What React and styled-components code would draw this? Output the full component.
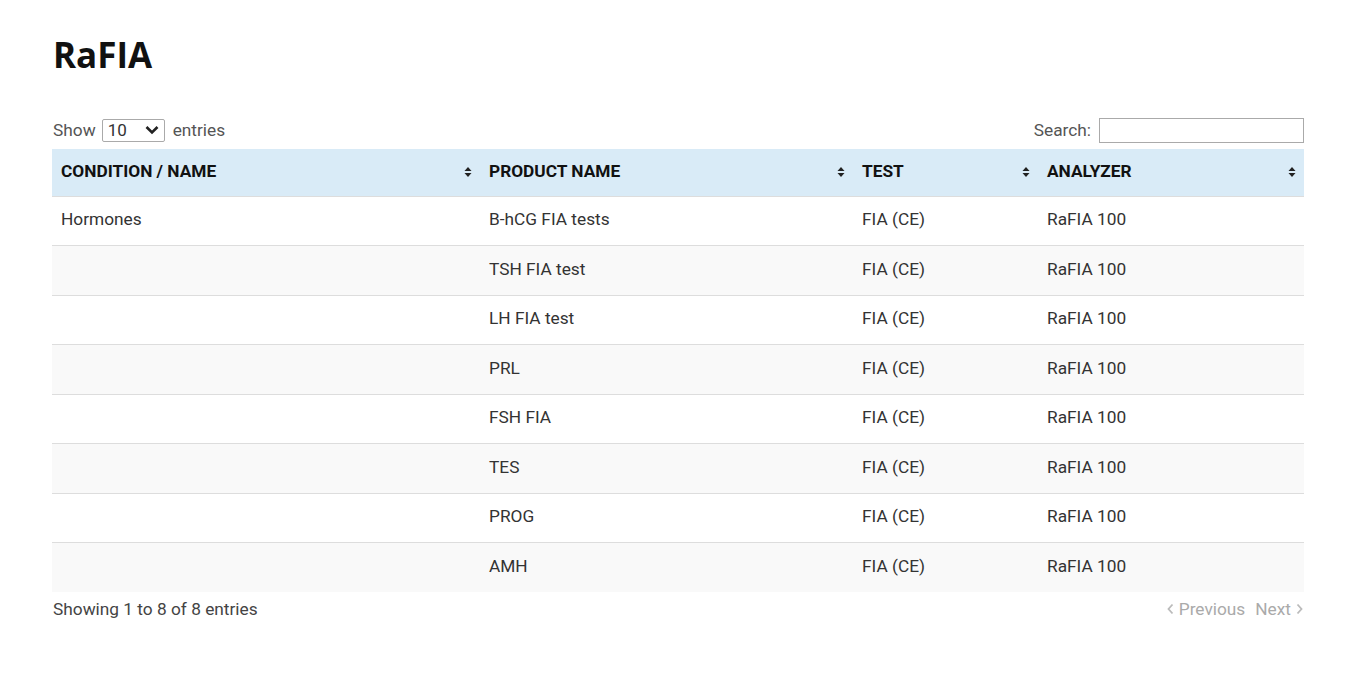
import styled, { createGlobalStyle } from "styled-components";

const GlobalStyle = createGlobalStyle`
  body {
    margin: 0;
    background: #fff;
    font-family: Roboto, "Liberation Sans", sans-serif;
  }
`;

const Page = styled.div`
  padding: 30px 49px 0 52px;
`;

const Title = styled.h1`
  margin: 0 0 0 1px;
  font-family: "Open Sans", "Noto Sans", sans-serif;
  font-size: 35px;
  font-weight: 700;
  line-height: 50px;
  color: #111;
`;

const Toolbar = styled.div`
  display: flex;
  justify-content: space-between;
  align-items: center;
  margin-top: 36px;
  height: 28px;
  font-size: 17.3px;
  color: #555;
`;

const Label = styled.label`
  display: flex;
  align-items: center;
  gap: ${(p) => p.$gap || 6}px;
  padding-left: 1px;
`;

const Select = styled.div`
  display: flex;
  align-items: center;
  justify-content: space-between;
  width: 63px;
  height: 23px;
  box-sizing: border-box;
  padding: 0 4px 0 5px;
  border: 1px solid #aaa;
  border-radius: 2px;
  font-size: 17px;
  color: #333;
  margin-right: 2px;
`;

const SearchBox = styled.input`
  width: 205px;
  height: 25px;
  box-sizing: border-box;
  border: 1px solid #aaa;
  margin-left: 2px;
`;

const Table = styled.table`
  width: 100%;
  border-collapse: collapse;
  table-layout: fixed;
  margin-top: 5px;
  font-size: 17.3px;
`;

const Th = styled.th`
  position: relative;
  height: 47px;
  box-sizing: border-box;
  padding: 0 24px 3px 9px;
  text-align: left;
  background: #d9ebf7;
  font-weight: 700;
  color: #111;
  border-bottom: 1px solid #ddd;
`;

const SortIcon = styled.svg`
  position: absolute;
  right: 8px;
  top: 50%;
  transform: translateY(-50%);
`;

const Tr = styled.tr`
  background: ${(p) => (p.$odd ? "#f9f9f9" : "#fff")};
`;

const Td = styled.td`
  height: 49.5px;
  box-sizing: border-box;
  padding: 0 9px 3px;
  color: #333;
  border-top: 1px solid #ddd;
  ${Tr}:first-child & {
    border-top: none;
  }
`;

const Footer = styled.div`
  display: flex;
  justify-content: space-between;
  align-items: center;
  height: 34px;
  font-size: 17.3px;
  color: #444;
  padding-left: 1px;
`;

const Pager = styled.div`
  display: flex;
  align-items: center;
  gap: 10px;
  color: #aaa;
`;

const PageLink = styled.span`
  display: flex;
  align-items: center;
  gap: 4px;
`;

const columns = [
  { label: "CONDITION / NAME", width: 428 },
  { label: "PRODUCT NAME", width: 373 },
  { label: "TEST", width: 185 },
  { label: "ANALYZER", width: 266 },
];

const products = ["B-hCG FIA tests", "TSH FIA test", "LH FIA test", "PRL", "FSH FIA", "TES", "PROG", "AMH"];

function Sort() {
  return (
    <SortIcon width="8" height="11" viewBox="0 0 8 11">
      <path d="M4 0.5 L7.5 4.5 L0.5 4.5 Z" fill="#222" />
      <path d="M0.5 6.5 L7.5 6.5 L4 10.5 Z" fill="#222" />
    </SortIcon>
  );
}

export default function App() {
  return (
    <>
      <GlobalStyle />
      <Page>
        <Title>RaFIA</Title>
        <Toolbar>
          <Label $gap={6}>
            Show
            <Select>
              10
              <svg width="16" height="10" viewBox="0 0 16 10">
                <path d="M2.5 2 L8 7.5 L13.5 2" stroke="#222" strokeWidth="2.6" fill="none" />
              </svg>
            </Select>
            entries
          </Label>
          <Label $gap={6}>
            Search:
            <SearchBox type="text" />
          </Label>
        </Toolbar>
        <Table>
          <colgroup>
            {columns.map((c) => (
              <col key={c.label} style={{ width: c.width }} />
            ))}
          </colgroup>
          <thead>
            <tr>
              {columns.map((c) => (
                <Th key={c.label}>
                  {c.label}
                  <Sort />
                </Th>
              ))}
            </tr>
          </thead>
          <tbody>
            {products.map((p, i) => (
              <Tr key={p} $odd={i % 2 === 1}>
                <Td>{i === 0 ? "Hormones" : ""}</Td>
                <Td>{p}</Td>
                <Td>FIA (CE)</Td>
                <Td>RaFIA 100</Td>
              </Tr>
            ))}
          </tbody>
        </Table>
        <Footer>
          <span>Showing 1 to 8 of 8 entries</span>
          <Pager>
            <PageLink>
              <svg width="9" height="14" viewBox="0 0 9 14">
                <path d="M6.5 2.5 L2.5 7 L6.5 11.5" stroke="#bbb" strokeWidth="1.8" fill="none" />
              </svg>
              Previous
            </PageLink>
            <PageLink>
              Next
              <svg width="9" height="14" viewBox="0 0 9 14">
                <path d="M2.5 2.5 L6.5 7 L2.5 11.5" stroke="#bbb" strokeWidth="1.8" fill="none" />
              </svg>
            </PageLink>
          </Pager>
        </Footer>
      </Page>
    </>
  );
}
